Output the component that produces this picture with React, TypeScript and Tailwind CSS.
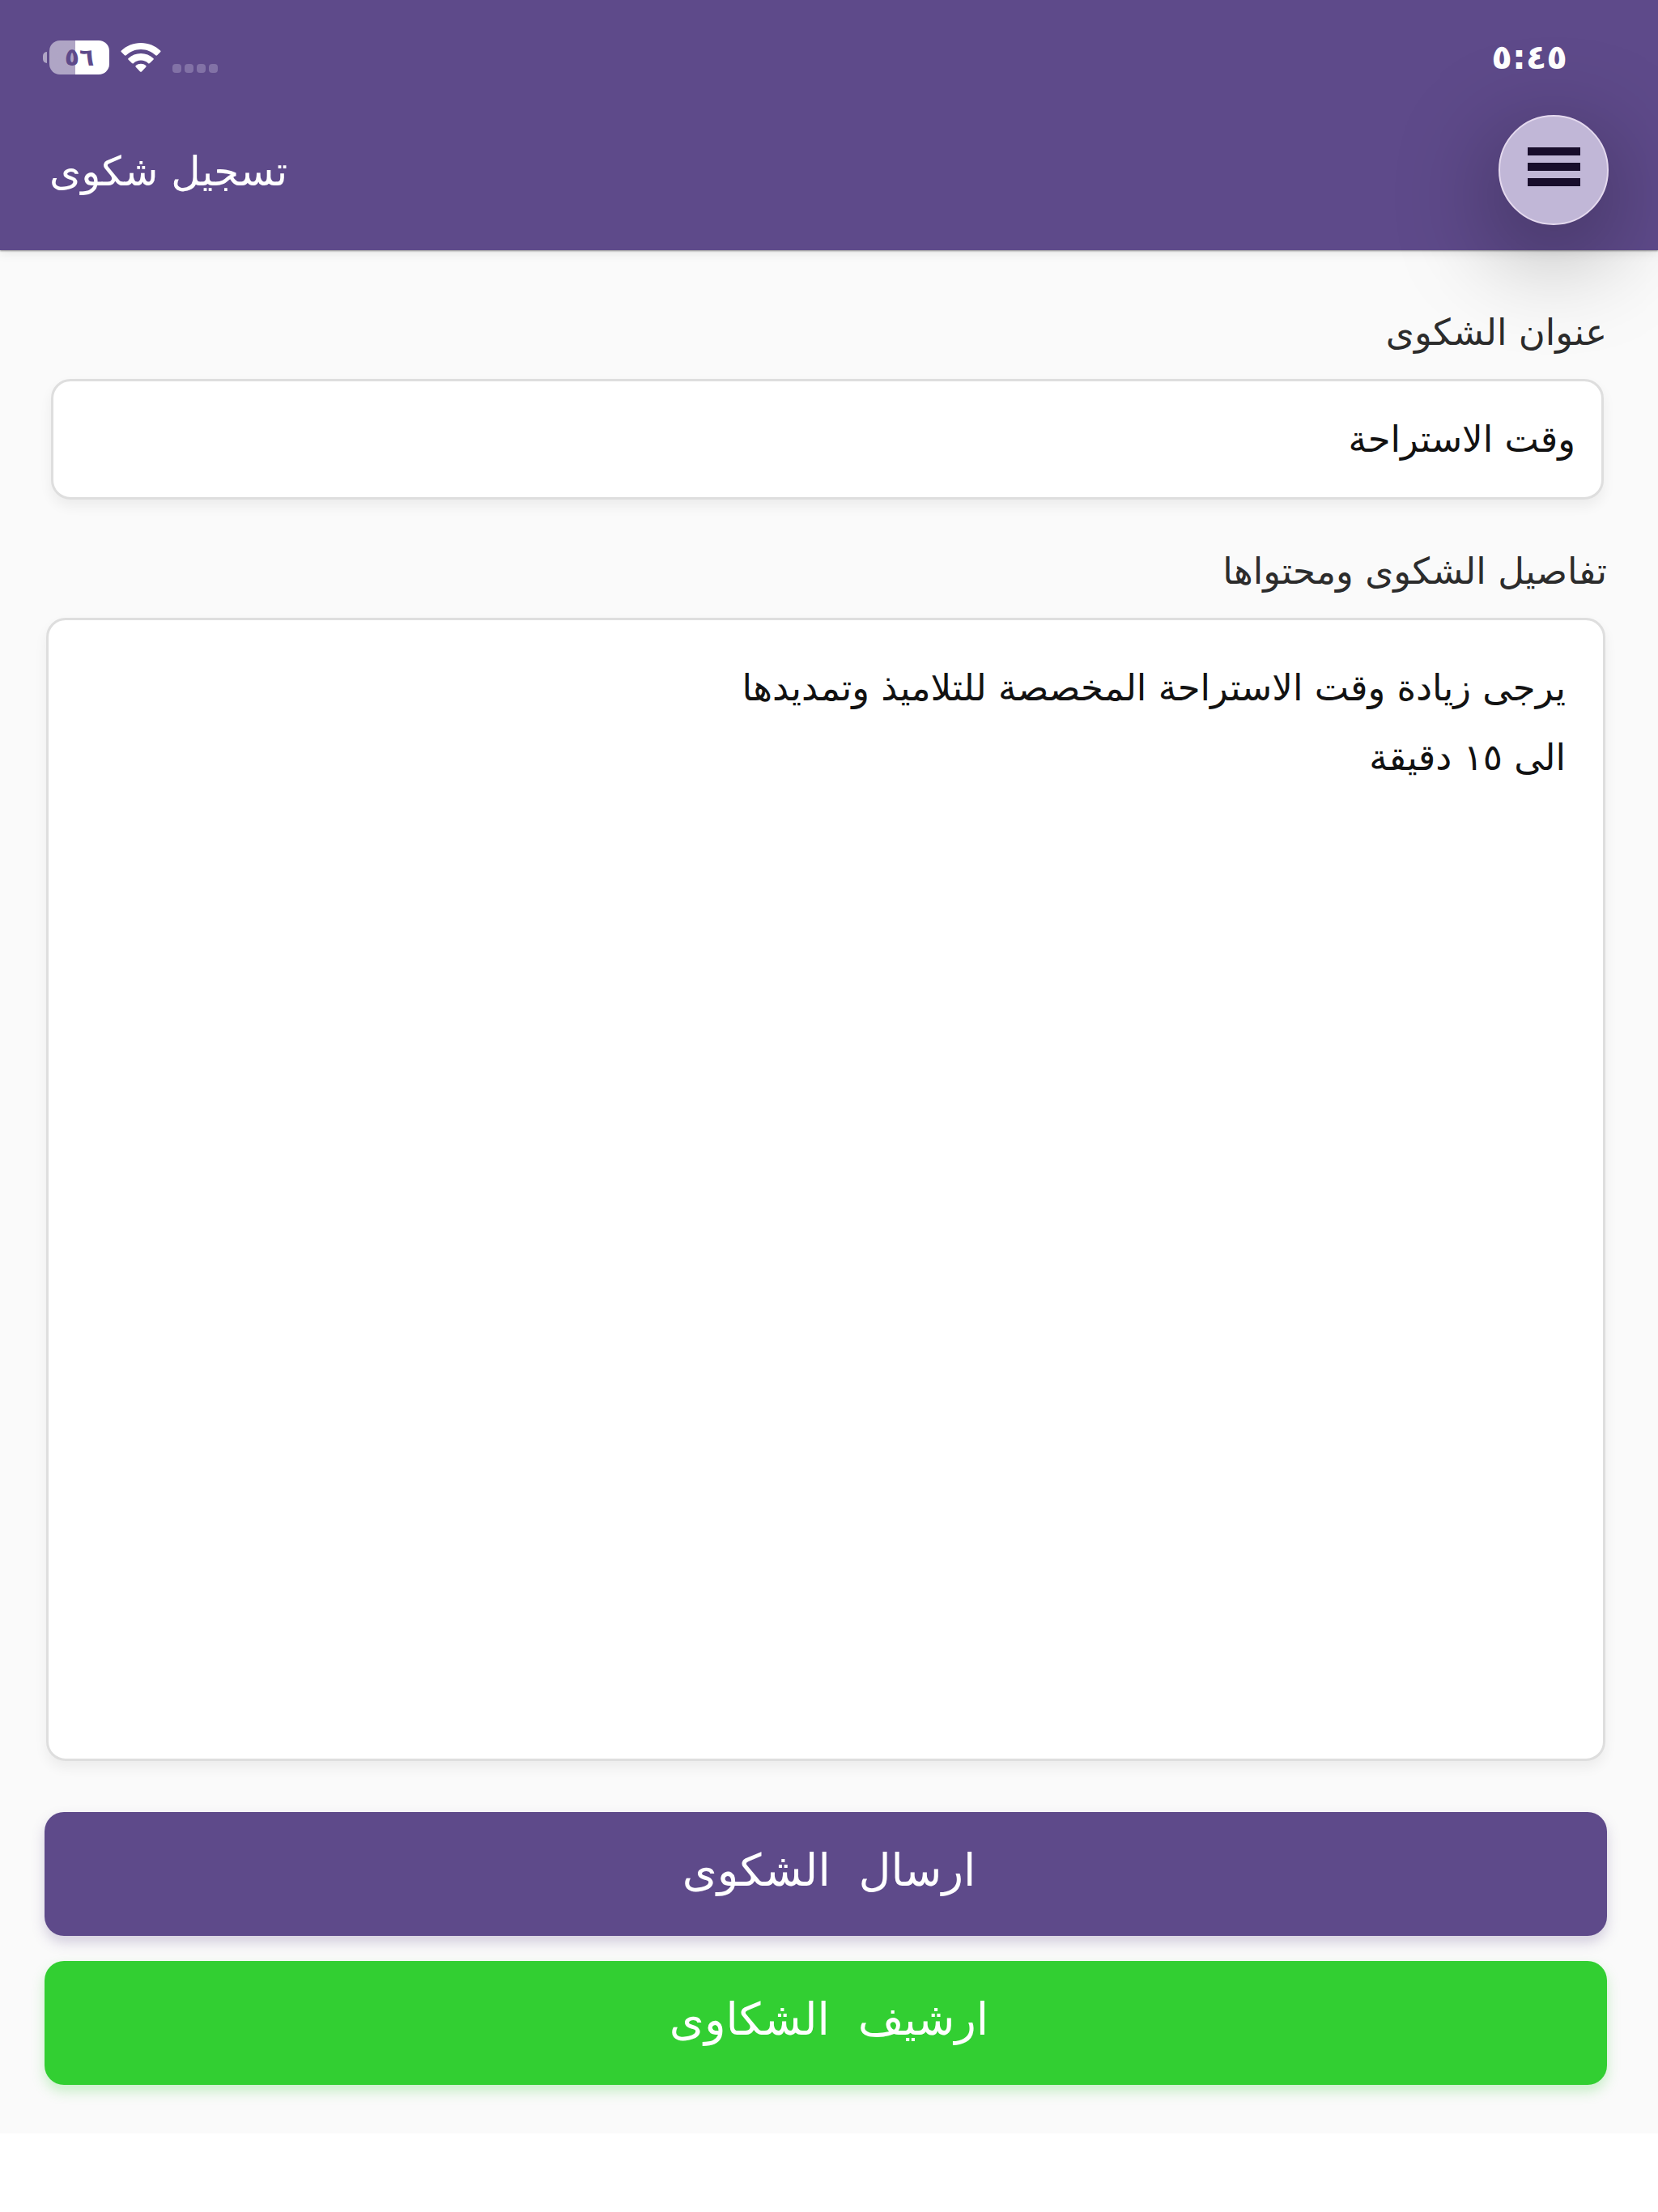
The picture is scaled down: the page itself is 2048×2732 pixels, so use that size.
import { useState } from "react";

function StatusBar() {
  return (
    <div className="flex h-[142px] items-center justify-between ps-[112px] pe-[53px]">
      <time className="text-[42px] leading-[56px] font-bold">٥:٤٥</time>
      <div className="flex items-center gap-[14px]" dir="ltr">
        <div className="flex items-center gap-[3px]">
          <span className="h-[14px] w-[5px] rounded-l-full bg-[#afa5c5]" />
          <span className="flex h-[42px] w-[74px] items-center justify-center rounded-[13px] bg-linear-to-r from-[#afa5c5] from-43% to-white to-43% text-[30px] leading-[40px] font-bold text-[#5e4a8a]">
            ٥٦
          </span>
        </div>
        <svg viewBox="0 0 50 38" className="h-[38px] w-[50px]" fill="currentColor" aria-hidden="true">
          <path d="M25 1C15.600 1 7 4.600 0.900 10.500c-.6.600-.6 1.200 0 1.800l4 4c.6.600 1.300.6 1.900 0C11.600 11.800 18 9 25 9s13.400 2.800 18.200 7.300c.6.600 1.300.6 1.900 0l4-4c.6-.6.6-1.200 0-1.800C43 4.600 34.400 1 25 1z" />
          <path d="M25 14c-5.900 0-11.300 2.300-15.400 6-.6.600-.6 1.200 0 1.800l4.400 4.300c.6.600 1.200.6 1.800.1C18.300 24 21.500 22.600 25 22.600s6.700 1.400 9.200 3.600c.6.500 1.200.5 1.800-.1l4.400-4.300c.6-.6.6-1.200 0-1.800-4.100-3.700-9.500-6-15.400-6z" />
          <path d="M25 26.800c-2.300 0-4.500.8-6.200 2.200-.6.500-.6 1.100-.1 1.700l5.400 5.700c.6.600 1.200.6 1.800 0l5.400-5.700c.5-.6.5-1.200-.1-1.700-1.700-1.400-3.900-2.200-6.200-2.200z" />
        </svg>
        <div className="flex gap-1 self-end pb-[2px]">
          {[0, 1, 2, 3].map((i) => (
            <span key={i} className="size-[11px] rounded-[4px] bg-[#8272a6]" />
          ))}
        </div>
      </div>
    </div>
  );
}

function Header() {
  return (
    <header className="relative z-10 bg-[#5e4a8a] text-white shadow-[0_1px_2px_rgba(0,0,0,0.4),0_4px_12px_rgba(0,0,0,0.08)]">
      <StatusBar />
      <div className="flex items-start justify-between px-[61px] pb-[27px]">
        <button
          type="button"
          aria-label="القائمة"
          className="flex size-[136px] flex-col items-center justify-center gap-[9px] rounded-full border-2 border-[#e4d9ee] bg-[#c1b7d7] pb-[8px] shadow-[0_32px_128px_rgba(0,0,0,0.4)]"
        >
          <span className="h-[10px] w-[65px] bg-[#180d2b]" />
          <span className="h-[10px] w-[65px] bg-[#180d2b]" />
          <span className="h-[10px] w-[65px] bg-[#180d2b]" />
        </button>
        <h1 className="text-[50px] leading-[140px]">تسجيل شكوى</h1>
      </div>
    </header>
  );
}

export default function App() {
  const [title, setTitle] = useState("وقت الاستراحة");
  const [details, setDetails] = useState(
    "يرجى زيادة وقت الاستراحة المخصصة للتلاميذ وتمديدها\nالى ١٥ دقيقة"
  );

  return (
    <div dir="rtl" className="min-h-screen bg-white font-['DejaVu_Sans',sans-serif]">
      <Header />
      <main>
        <form
          className="flex flex-col bg-[#fafafa] ps-[63px] pe-[55px] pt-[74px] pb-[60px]"
          onSubmit={(e) => e.preventDefault()}
        >
          <label htmlFor="title" className="text-[45px] leading-[56px] text-[#2c2c2c]">
            عنوان الشكوى
          </label>
          <input
            id="title"
            type="text"
            value={title}
            onChange={(e) => setTitle(e.target.value)}
            className="mt-[29px] ms-1 me-2 h-[149px] rounded-[24px] border-3 border-[#dedede] bg-white px-8 text-[45px] text-[#121212] shadow-[0_8px_16px_rgba(0,0,0,0.06)] outline-none"
          />
          <label htmlFor="details" className="mt-[61px] text-[45px] leading-[56px] text-[#2c2c2c]">
            تفاصيل الشكوى ومحتواها
          </label>
          <textarea
            id="details"
            rows={15}
            value={details}
            onChange={(e) => setDetails(e.target.value)}
            className="mt-[29px] mx-[2px] resize-none rounded-[24px] border-3 border-[#dedede] bg-white px-[46px] pt-[41px] pb-[75px] text-[45px] leading-[86px] text-[#121212] shadow-[0_8px_16px_rgba(0,0,0,0.06)] outline-none"
          />
          <button
            type="submit"
            className="mt-[63px] h-[153px] rounded-[24px] bg-[#5e4a8a] pb-2 pl-2 text-[55px] whitespace-pre text-white shadow-[0_8px_16px_rgba(94,74,138,0.25)]"
          >
            {"ارسال  الشكوى"}
          </button>
          <button
            type="button"
            className="mt-[31px] h-[153px] rounded-[24px] bg-[#32cf32] pb-2 pl-2 text-[55px] whitespace-pre text-white shadow-[0_8px_16px_rgba(50,207,50,0.25)]"
          >
            {"ارشيف  الشكاوى"}
          </button>
        </form>
      </main>
    </div>
  );
}
